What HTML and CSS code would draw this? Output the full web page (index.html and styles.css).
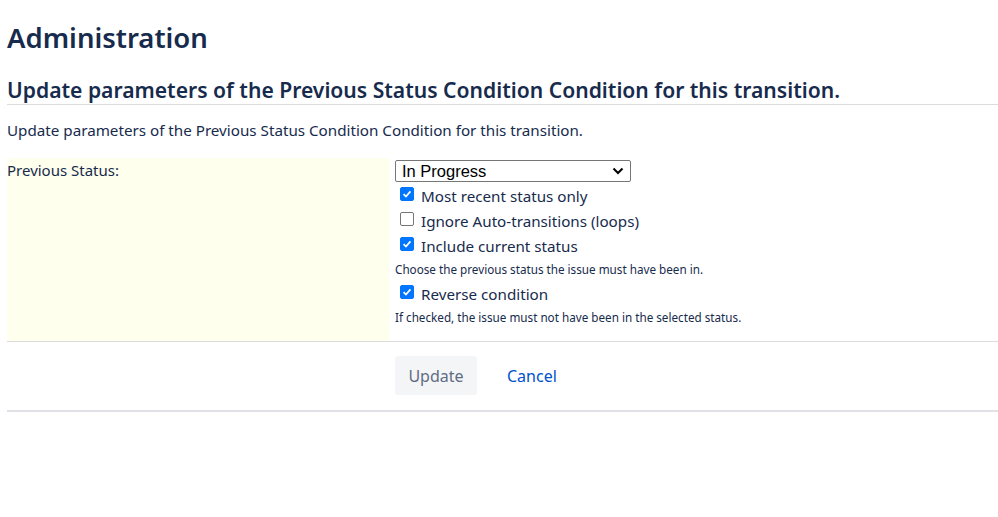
FILE: index.html
```html
<!DOCTYPE html>
<html>
<head>
<meta charset="utf-8">
<link rel="stylesheet" href="styles.css">
</head>
<body>
<div class="page">
  <h1 class="title">Administration</h1>
  <h2 class="subtitle">Update parameters of the Previous Status Condition Condition for this transition.</h2>
  <p class="intro">Update parameters of the Previous Status Condition Condition for this transition.</p>
  <div class="form-row">
    <div class="label-cell">Previous Status:</div>
    <div class="field-cell">
      <div class="select-box"><span>In Progress</span>
        <svg class="chev" width="12" height="8" viewBox="0 0 12 8"><path d="M1.5 1.5 L6 6 L10.5 1.5" fill="none" stroke="#000" stroke-width="2"/></svg>
      </div>
      <label class="check"><span class="box on"><svg viewBox="0 0 14 14" width="14" height="14"><path d="M3 7.2 L5.8 10 L11 4" fill="none" stroke="#fff" stroke-width="2"/></svg></span>Most recent status only</label>
      <label class="check"><span class="box"></span>Ignore Auto-transitions (loops)</label>
      <label class="check"><span class="box on"><svg viewBox="0 0 14 14" width="14" height="14"><path d="M3 7.2 L5.8 10 L11 4" fill="none" stroke="#fff" stroke-width="2"/></svg></span>Include current status</label>
      <div class="hint">Choose the previous status the issue must have been in.</div>
      <label class="check"><span class="box on"><svg viewBox="0 0 14 14" width="14" height="14"><path d="M3 7.2 L5.8 10 L11 4" fill="none" stroke="#fff" stroke-width="2"/></svg></span>Reverse condition</label>
      <div class="hint">If checked, the issue must not have been in the selected status.</div>
    </div>
  </div>
  <div class="actions">
    <div class="spacer"></div>
    <div class="buttons">
      <span class="btn-update">Update</span>
      <span class="btn-cancel">Cancel</span>
    </div>
  </div>
</div>
</body>
</html>
```
FILE: styles.css
```css
html, body {
  margin: 0;
  padding: 0;
  background: #fff;
}
body {
  font-family: "Noto Sans", "Open Sans", sans-serif;
  color: #172b4d;
  font-size: 15px;
}
.page {
  padding: 0 0 0 7px;
}
.title {
  margin: 0;
  padding-top: 20px;
  font-size: 27.5px;
  font-weight: 600;
  line-height: 36px;
  height: 40px;
}
.subtitle {
  margin: 17px 0 0;
  font-size: 21.1px;
  font-weight: 600;
  line-height: 26px;
  padding-bottom: 1px;
  border-bottom: 1px solid #dcdcdc;
}
.intro {
  margin: 15px 0 0;
  line-height: 20px;
  font-size: 15.2px;
}
.form-row {
  margin-top: 18px;
  display: flex;
  border-bottom: 1px solid #dcdcdc;
}
.label-cell {
  width: 382px;
  background: #ffffee;
  padding: 2px 0 0 0;
  line-height: 20px;
  min-height: 181px;
}
.field-cell {
  padding: 2px 0 0 6px;
}
.select-box {
  height: 20px;
  border: 1px solid #767676;
  border-radius: 2px;
  display: flex;
  align-items: center;
  justify-content: space-between;
  padding: 0 6px;
  box-sizing: content-box;
  width: 222px;
  font-family: "Liberation Sans", Arial, sans-serif;
  font-size: 16.5px;
  color: #000;
  margin-bottom: 1px;
}
.check {
  display: flex;
  align-items: center;
  height: 25px;
  font-size: 15.2px;
  padding-left: 5px;
}
.box {
  width: 14px;
  height: 14px;
  border: 1px solid #767676;
  border-radius: 2px;
  margin-right: 7px;
  box-sizing: border-box;
  display: inline-flex;
  align-items: center;
  justify-content: center;
  margin-top: -4px;
}
.box.on {
  background: #0075ff;
  border-color: #0075ff;
}
.box svg { width: 14px; height: 14px; }
.hint {
  font-size: 11.7px;
  line-height: 23px;
}
.actions {
  display: flex;
  border-bottom: 2px solid #dfe1e6;
  padding: 14px 0 15px;
}
.spacer { width: 388px; }
.buttons {
  display: flex;
  align-items: center;
  gap: 30px;
}
.btn-update {
  background: #f4f5f7;
  color: #5e6c84;
  border-radius: 3px;
  width: 82px;
  text-align: center;
  height: 39px;
  line-height: 40px;
  font-size: 16px;
}
.btn-cancel {
  color: #0052cc;
  font-size: 16px;
  padding-top: 1px;
}
```
